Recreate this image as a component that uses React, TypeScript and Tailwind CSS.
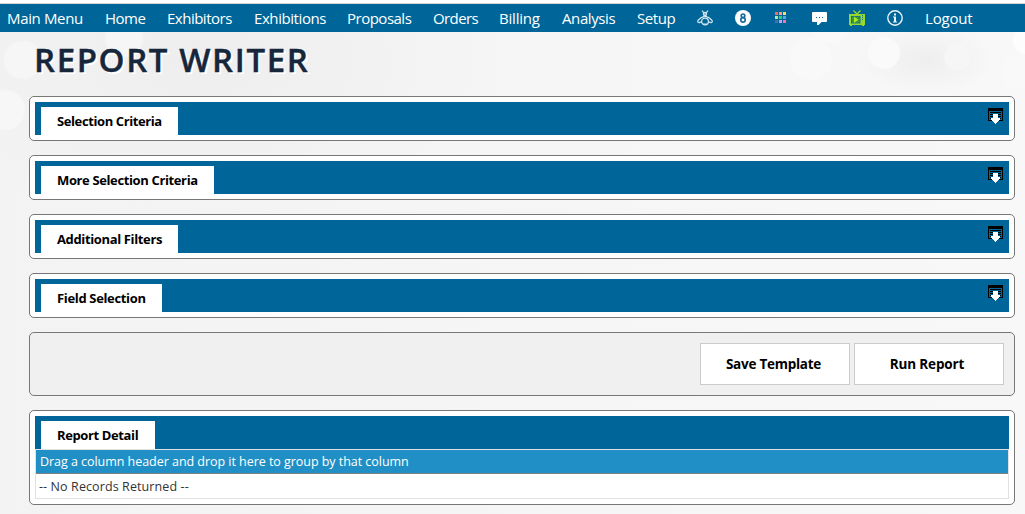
import React from "react";

const navLinks = [
  { label: "Main Menu", cls: "w-[98px] tracking-[-0.35px]" },
  { label: "Home", cls: "w-[62px] tracking-[-0.5px]" },
  { label: "Exhibitors", cls: "w-[87px] tracking-[-0.5px]" },
  { label: "Exhibitions", cls: "w-[93px] tracking-[-0.42px]" },
  { label: "Proposals", cls: "w-[86px] tracking-[-0.5px]" },
  { label: "Orders", cls: "w-[66px] tracking-[-0.6px]" },
  { label: "Billing", cls: "w-[63px] tracking-[-0.2px]" },
  { label: "Analysis", cls: "w-[75px] tracking-[-0.4px]" },
  { label: "Setup", cls: "w-[60px] tracking-[-0.4px]" },
];

function BeeIcon() {
  return (
    <svg width="16" height="16" viewBox="0 0 16 16" fill="none" stroke="#d4e7f0" strokeWidth="1.2">
      <path d="M5 .6 6.600 2.600M11 .6 9.400 2.600" />
      <circle cx="8" cy="4" r="1.600" fill="#7fb2cc" />
      <path d="M7.200 6.500 4.200 7.600 1.400 10C.2 11.400.6 12.800 2.200 12.600L5 11.600 M8.800 6.500l3 1.100 2.800 2.400c1.200 1.400.8 2.800-.8 2.600L11 11.600" />
      <circle cx="8" cy="11.500" r="3.400" />
      <path d="M6 6.500h4M6.200 14h3.600" />
    </svg>
  );
}

function EightIcon() {
  return (
    <svg width="16" height="16" viewBox="0 0 16 16">
      <circle cx="8" cy="8" r="8" fill="#fff" />
      <g fill="none" stroke="#1a6c9c" strokeWidth="1.700">
        <circle cx="8" cy="5.800" r="1.800" />
        <circle cx="8" cy="9.900" r="2.200" />
      </g>
    </svg>
  );
}

const dots = ["#ff6666", "#ffa060", "#ffd860", "#b5e3a0", "#3ccf60", "#50a8e8", "#4a6cb0", "#d898e8", "#ff70a8"];

function GridIcon() {
  return (
    <svg width="12" height="12" viewBox="0 0 12 12">
      {dots.map((c, i) => (
        <rect key={c} x={(i % 3) * 4} y={Math.floor(i / 3) * 4} width="3" height="3" fill={c} />
      ))}
    </svg>
  );
}

function ChatIcon() {
  return (
    <svg width="15" height="14" viewBox="0 0 15 14">
      <path d="M1 0h13a1 1 0 0 1 1 1v8a1 1 0 0 1-1 1H9.500l-3 3H5v-3H1a1 1 0 0 1-1-1V1a1 1 0 0 1 1-1Z" fill="#fff" />
      <path d="M4 5.500h1M7 5.500h1M10 5.500h1" stroke="#006699" />
    </svg>
  );
}

function TvIcon() {
  return (
    <svg width="16" height="16" viewBox="0 0 16 16">
      <path d="M4.500.5 8 4 11.500.5" fill="none" stroke="#97d92b" strokeWidth="1.300" />
      <path d="M0 4h16v11H0Z" fill="#97d92b" />
      <path d="M1 15h2v1H1ZM13 15h2v1h-2Z" fill="#97d92b" />
      <path d="M2 6h9.500v7.500H2Z" fill="#107090" />
      <path d="M2.800 6.800h7.900v5.900H2.800Z" fill="#3f943f" />
      <path d="M5 6.500 9.500 9.700 5 13Z" fill="#a8ea20" />
      <path d="M13 5.500h1M13 7.500h1M13 9.500h1" stroke="#107090" />
    </svg>
  );
}

function InfoIcon() {
  return (
    <svg width="16" height="16" viewBox="0 0 16 16">
      <circle cx="8" cy="8" r="7.200" fill="none" stroke="#eaf4f9" strokeWidth="1.400" />
      <path d="M7 3.500h2v2H7ZM6 6.500h3v5h1v1H6v-1h1v-4H6Z" fill="#eaf4f9" />
    </svg>
  );
}

function ExpandIcon() {
  return (
    <svg width="15" height="16" viewBox="0 0 15 16" shapeRendering="crispEdges">
      <path d="M0 0h15v3H0ZM0 3h1v10H0ZM14 3h1v10h-1ZM0 12h15v1H0Z" fill="#000" />
      <path d="M2 4h11v1H2ZM2 6h11v1H2ZM2 8h11v1H2ZM2 10h11v1H2Z" fill="#000" />
      <path d="M5 6h5v4h2v2h-1v1h-1v1H9v1H8v1H7v-1H6v-1H5v-1H4v-1H3v-2h2Z" fill="#fff" />
    </svg>
  );
}

function TabBar({ title, tab, expandable = true }: { title: string; tab: string; expandable?: boolean }) {
  return (
    <div className="flex h-[33px] items-start justify-between bg-[#006699] pl-[6px] pr-[6px] pt-[5px]">
      <h2 className={`h-7 whitespace-nowrap bg-white pl-4 text-[13px] font-bold leading-[28px] text-black ${tab}`}>{title}</h2>
      {expandable && (
        <button aria-label="Expand" className="mt-px">
          <ExpandIcon />
        </button>
      )}
    </div>
  );
}

const panel = "rounded-[5px] border border-[#777777] bg-white p-[5px]";

const sections = [
  { title: "Selection Criteria", tab: "w-[137px] tracking-[-0.4px]" },
  { title: "More Selection Criteria", tab: "w-[173px] tracking-[-0.37px]" },
  { title: "Additional Filters", tab: "w-[137px] tracking-[-0.36px]" },
  { title: "Field Selection", tab: "w-[121px] tracking-[-0.34px]" },
];

export default function App() {
  return (
    <div className="h-[514px] w-[1025px] overflow-hidden bg-[#f4f4f4] bg-[radial-gradient(circle_at_811px_59px,#f9f9f9_20px,transparent_22px),radial-gradient(circle_at_884px_53px,#fafafa_15px,transparent_17px),radial-gradient(circle_at_831px_22px,#f9f9f9_20px,transparent_22px),radial-gradient(circle_at_1026px_41px,#fdfdfd_12px,transparent_14px),radial-gradient(circle_at_957px_57px,#f6f6f6_12px,transparent_14px),radial-gradient(circle_at_1018px_72px,#f9f9f9_16px,transparent_18px),radial-gradient(circle_at_124px_38px,#f6f6f6_18px,transparent_20px),radial-gradient(circle_at_23px_60px,#f6f6f6_18px,transparent_20px),radial-gradient(circle_at_5px_110px,#f7f7f7_19px,transparent_21px),radial-gradient(ellipse_at_925px_60px,#eeeeee_0px,transparent_70px),radial-gradient(ellipse_at_200px_60px,#eeeeee_0px,transparent_300px),linear-gradient(90deg,#f3f3f3,#f8f8f8)] font-['Open_Sans','Noto_Sans',sans-serif]">
      <div className="h-1 border-b border-[#d4d4d4] bg-white" />
      <nav className="flex h-7 items-center bg-[#006699] pl-[7px] text-[15px] leading-[28px] text-white">
        {navLinks.map((l) => (
          <a key={l.label} className={`shrink-0 whitespace-nowrap ${l.cls}`}>
            {l.label}
          </a>
        ))}
        <a className="w-[38px] shrink-0"><BeeIcon /></a>
        <a className="w-[40px] shrink-0"><EightIcon /></a>
        <a className="w-[37px] shrink-0"><GridIcon /></a>
        <a className="w-[37px] shrink-0 pt-[2px]"><ChatIcon /></a>
        <a className="w-[38px] shrink-0"><TvIcon /></a>
        <a className="w-[38px] shrink-0"><InfoIcon /></a>
        <a className="tracking-[-0.2px]">Logout</a>
      </nav>
      <main className="pl-[29px] pr-[10px]">
        <h1 className="h-16 whitespace-nowrap pl-[5px] text-[33px] font-semibold leading-[56px] tracking-[1.6px] text-[#16263b] [-webkit-text-stroke:0.4px_#16263b] [text-shadow:2px_2px_0_#fff]">
          REPORT WRITER
        </h1>
        <div className="flex flex-col gap-[14px]">
          {sections.map((s) => (
            <section key={s.title} className={panel}>
              <TabBar title={s.title} tab={s.tab} />
            </section>
          ))}
          <div className="flex h-16 justify-end gap-1 rounded-[5px] border border-[#777777] bg-[#f0f0f0] px-[10px] py-[10px] text-[13.5px] font-bold">
            <button className="h-[42px] w-[150px] border border-[#cccccc] bg-white pr-[3px] tracking-[-0.25px]">Save Template</button>
            <button className="h-[42px] w-[150px] border border-[#cccccc] bg-white pr-1 tracking-[-0.15px]">Run Report</button>
          </div>
          <section className={panel}>
            <TabBar title="Report Detail" tab="w-[114px] tracking-[-0.38px]" expandable={false} />
            <div className="h-[50px] border border-[#e2e2e2] text-[12.5px]">
              <div className="h-6 border-b border-[#808080] bg-[#208fc6] pl-[4px] leading-[24px] text-white">
                <span className="tracking-[-0.04px]">Drag a column header and drop it here to group by that column</span>
              </div>
              <div className="pl-[3px] leading-[25px] text-[#333333]">
                <span className="tracking-[0.1px]">-- No Records Returned --</span>
              </div>
            </div>
          </section>
        </div>
      </main>
    </div>
  );
}
